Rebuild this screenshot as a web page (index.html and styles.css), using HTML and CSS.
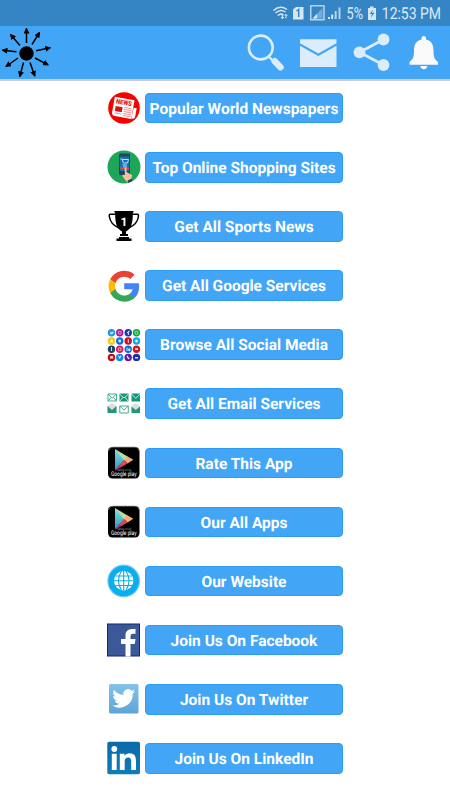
FILE: index.html
```html
<!DOCTYPE html>
<html lang="en">
<head>
<meta charset="utf-8">
<meta name="viewport" content="width=device-width, initial-scale=1">
<title>All in One</title>
<link rel="stylesheet" href="styles.css">
</head>
<body>
<svg class="defs" width="0" height="0" aria-hidden="true">
  <defs>
    <marker id="arrow" viewBox="0 0 6 6" refX="5" refY="3" markerWidth="6" markerHeight="6" markerUnits="userSpaceOnUse" orient="auto"><path d="M0 0L6 3L0 6z"/></marker>
    <linearGradient id="playBlue" x1="0" y1="0" x2="0" y2="1"><stop offset="0" stop-color="#8bdcdb"/><stop offset="1" stop-color="#249cc0"/></linearGradient>
    <linearGradient id="bird" x1="0" y1="0" x2="0" y2="1"><stop offset="0" stop-color="#82c3ea"/><stop offset="1" stop-color="#5ea4d6"/></linearGradient>
    <linearGradient id="link" x1="0" y1="0" x2="0" y2="1"><stop offset="0" stop-color="#0b6aa8"/><stop offset="1" stop-color="#0d7cbc"/></linearGradient>
    <symbol id="play" viewBox="0 0 34 34">
      <rect x="1" y="1" width="31.5" height="31.5" rx="4.5" fill="#000"/>
      <path d="M1.5 5Q2 1.2 6 1.2H28Q32 1.2 32.2 5" fill="none" stroke="#777" stroke-width=".8"/>
      <path d="M8 3V24L18.500 13z" fill="url(#playBlue)"/>
      <path d="M8 3L20.500 10.500L17.500 15z" fill="#b7dda9"/>
      <path d="M20.300 10.300L26.300 13.800L20.500 17.500L17 13.800z" fill="#f4b06c"/>
      <path d="M8 24.500L17 13.800L20.500 17.500z" fill="#d9485c"/>
      <path d="M8 24.500L12 19L14 21z" fill="#9a3a91"/>
      <text x="10" y="25.300" font-size="2.4" textLength="14" lengthAdjust="spacingAndGlyphs" fill="#bbb">ANDROID APP ON</text>
      <text x="4" y="30.300" font-size="6.300" textLength="25.500" lengthAdjust="spacingAndGlyphs" fill="#fff">Google play</text>
    </symbol>
  </defs>
</svg>

<div class="status">
  <svg width="178" height="26" viewBox="272 0 178 26">
    <g fill="none" stroke="#d6e7f4" stroke-width="1.5">
      <path d="M273.500 10.500Q280 4.500 287 9.500M275.500 13Q280.500 8.500 285.500 12M277.800 15.500Q280.800 13 283.500 15"/>
      <path d="M282.500 15v3.500M281 17l1.500 1.800 1.500-1.800M286 18.500V14.500M284.700 16l1.300-1.600 1.300 1.600" stroke-width="1"/>
      <rect x="310.800" y="5.800" width="13.200" height="14" stroke-width="1.200"/>
    </g>
    <path d="M293 9.500L296 7H303.500V19.500H293z" fill="#d6e7f4"/>
    <path d="M296.500 11L298.700 9.500V17" fill="none" stroke="#3585c5" stroke-width="1.500"/>
    <path d="M312.500 18.500L322.500 8V18.500z" fill="#73abd8"/>
    <path d="M312.500 18.500L317 14V18.500z" fill="#d6e7f4"/>
    <g fill="#d6e7f4"><path d="M328 17h2v2h-2z"/><path d="M331.200 14.500h2v4.500h-2z"/><path d="M334.700 11h2v8h-2z" opacity=".8"/><path d="M338.500 7.500h2V19h-2z" opacity=".8"/>
    <path d="M368 8h2V6.500h3.500V8h2.500V20h-8z"/></g>
    <path d="M373 9.500L369.700 14H372L370.800 18L374.500 12.700H372z" fill="#3585c5"/>
    <text x="346.500" y="19.300" textLength="16.500" lengthAdjust="spacingAndGlyphs">5%</text>
    <text x="381.800" y="19.300" textLength="59.200" lengthAdjust="spacingAndGlyphs">12:53 PM</text>
  </svg>
</div>

<header class="bar">
  <svg class="logo" width="54" height="53" viewBox="0 26 54 53">
    <circle cx="26.500" cy="53.500" r="7.200"/>
    <g stroke="#000" stroke-width="1.500">
      <path d="M26.500 43V28.500" marker-end="url(#arrow)"/><path d="M32 44.500L39.500 32.500" marker-end="url(#arrow)"/><path d="M36 50.800L50.300 47.800" marker-end="url(#arrow)"/><path d="M35 58L48 64.800" marker-end="url(#arrow)"/><path d="M30 62.500L34.800 76" marker-end="url(#arrow)"/><path d="M23.500 62.500L19.700 76.500" marker-end="url(#arrow)"/><path d="M18 58L6 66.500" marker-end="url(#arrow)"/><path d="M16.500 51.700L2.500 50.200" marker-end="url(#arrow)"/><path d="M20 45.500L10.500 34.500" marker-end="url(#arrow)"/>
    </g>
  </svg>
  <nav class="actions">
    <svg width="38" height="40" viewBox="247 32 38 40"><circle cx="260.800" cy="47.500" r="11.900" fill="none" stroke="#dbedfc" stroke-width="2.600"/><path d="M268.700 56.500L273 61" stroke="#dbedfc" stroke-width="2.200"/><path d="M274.700 61.300L280.500 67.200" stroke="#dbedfc" stroke-width="6.500" stroke-linecap="round"/></svg>
    <svg width="38" height="40" viewBox="299 32 38 40"><path d="M300 39.300H336.500V43.200L318.300 53.500L300 43.200zM300 45.800L318.300 56L336.500 45.800V67H300z" fill="#dbedfc"/></svg>
    <svg width="38" height="40" viewBox="353 32 38 40"><path d="M383.500 39.500L359.500 52.300L383.500 65" fill="none" stroke="#dbedfc" stroke-width="2.800"/><g fill="#dbedfc"><circle cx="383.500" cy="39.500" r="5.900"/><circle cx="359.500" cy="52.300" r="5.900"/><circle cx="383.500" cy="65" r="5.900"/></g></svg>
    <svg width="32" height="40" viewBox="408 32 32 40"><path d="M421.500 39.500V38Q421.500 36 423.700 36T426 38V39.500C432 41 433.500 45 433.500 51C433.500 58 435 59.500 438 62V64.800H409.500V62C412.500 59.500 414 58 414 51C414 45 415.500 41 421.500 39.500zM420.300 66H427.300Q426.500 69.200 423.800 69.200T420.300 66z" fill="#f9f9f9"/></svg>
  </nav>
</header>

<main class="list">
  <div class="row">
    <svg class="icon" viewBox="0 0 34 34"><circle cx="17" cy="17" r="15.800" fill="#f90000"/><g transform="rotate(10 17 17)"><path d="M6 7.500H26V26.500H9.500Q6 26.500 6 23.500z" fill="#fff"/><path d="M26.500 15H29.500V23.500Q29.500 26 27.500 26H26z" fill="#fff"/><text x="8" y="13.800" class="news" textLength="16" lengthAdjust="spacingAndGlyphs">NEWS</text><path d="M8.500 16.500h7v5h-7z" fill="#d61212"/><path d="M17 16.500h8M17 18.500h8M17 20.500h8M17 22.500h8M8.500 23.500h7M17 24.500h8" stroke="#ef8b8b" stroke-width=".9"/></g></svg>
    <a class="button" href="#">Popular World Newspapers</a>
  </div>
  <div class="row">
    <svg class="icon" viewBox="0 0 34 34"><circle cx="17" cy="17" r="16.500" fill="#1ba658"/><rect x="12" y="3.500" width="11" height="21.500" rx="1.500" fill="#28415d"/><path d="M13 6.500h9v14.500h-9z" fill="#156fb2"/><path d="M13.500 9h1.500l1.500 4h4l1-3.500h-6M15.500 15h4.500M16 17h4" fill="none" stroke="#b6e5ff" stroke-width="1"/><path d="M13 17.500h9v2h-9z" fill="#e44836"/><path d="M17.500 18Q18.500 16.500 19.500 18V22L25 25L24.500 30L20.500 32.500Q17 29 15.500 26Q15 24 18 25z" fill="#f4c39c"/><path d="M20.500 30.500L25 28.500V31L21 33z" fill="#344058"/></svg>
    <a class="button" href="#">Top Online Shopping Sites</a>
  </div>
  <div class="row">
    <svg class="icon" viewBox="0 0 34 34"><path d="M9 5.200H3.300Q2 5.200 2.300 7.500Q3.500 15.500 12 19M24.500 5.200H30.500Q31.700 5.200 31.400 7.500Q30.500 15.500 21.500 19" fill="none" stroke="#000" stroke-width="1.500"/><path d="M7.500 2H26.500V3.500H25.800C26 13 24.500 20 19 22.500V25H21V27H13V25H15V22.500C9.500 20 8 13 8.200 3.500H7.500zM12 28H22V29.500H24.500V32H9.500V29.500H12z"/><text class="one" x="13.500" y="16.500">1</text></svg>
    <a class="button" href="#">Get All Sports News</a>
  </div>
  <div class="row">
    <svg class="icon" viewBox="0 0 34 34"><g transform="translate(1.600 1.500) scale(1.300)"><path fill="#4285f4" d="M23.500 12.300c0-.8-.1-1.600-.2-2.400H12v4.600h6.500a5.600 5.600 0 0 1-2.400 3.600v3h3.900c2.300-2.100 3.500-5.200 3.500-8.800z"/><path fill="#34a853" d="M12 24c3.200 0 5.900-1.100 8-2.900l-3.900-3a7.200 7.200 0 0 1-10.800-3.800h-4v3.100A12 12 0 0 0 12 24z"/><path fill="#fbbc05" d="M5.300 14.300a7.200 7.200 0 0 1 0-4.600V6.600h-4a12 12 0 0 0 0 10.800z"/><path fill="#ea4335" d="M12 4.800c1.800 0 3.400.6 4.600 1.800L20 3.200A12 12 0 0 0 1.300 6.600l4 3.100A7.200 7.200 0 0 1 12 4.800z"/></g></svg>
    <a class="button" href="#">Get All Google Services</a>
  </div>
  <div class="row">
    <svg class="icon" viewBox="0 0 34 34">
      <circle cx="4.500" cy="4.700" r="3.700" fill="#149af0"/><circle cx="12.700" cy="4.700" r="3.700" fill="#a31993"/><circle cx="21.200" cy="4.700" r="3.700" fill="#173ba8"/><circle cx="29.500" cy="4.700" r="3.700" fill="#12ad3d"/>
      <circle cx="4.500" cy="13" r="3.700" fill="#ffc400"/><circle cx="12.700" cy="13" r="3.700" fill="#0670ef"/><circle cx="21.200" cy="13" r="3.700" fill="#c70e28"/><circle cx="29.500" cy="13" r="3.700" fill="#0ba7ef"/>
      <circle cx="4.500" cy="21.200" r="3.700" fill="#184867"/><circle cx="12.700" cy="21.200" r="3.700" fill="#e71660"/><circle cx="21.200" cy="21.200" r="3.700" fill="#086fd7"/><circle cx="29.500" cy="21.200" r="3.700" fill="#cc1924"/>
      <circle cx="4.500" cy="29.400" r="3.700" fill="#c9090d"/><circle cx="12.700" cy="29.400" r="3.700" fill="#108de7"/><circle cx="21.200" cy="29.400" r="3.700" fill="#6a159f"/><circle cx="29.500" cy="29.400" r="3.700" fill="#1731a8"/>
      <g fill="#fff" opacity=".85"><path d="M2.700 3.500l2 1 1.700-1.300Q6.800 7 2.700 6.200l1-.7zM2.800 14.500Q3.700 13.500 3.500 12q1-1.500 2 0 0 1.500 1 2.500zM3 28.300h3.200v2.300H3zM11 27.800h1l.5 1.300 1-1.500 1 .5-2 3zM19.500 28l1.300-.5.5 1.500 1.500 1.500-1 1q-2-1-2.300-3.500zM28 29h3v1.500h-3z"/><path d="M20.800 7V5h-.8V4h.8Q20.700 2.500 22.700 2.700v1h-.8V7zM4 19h1v4H4zM19.500 19.500h1V23h-1zM21.300 20.500h2V23h-2zM28 20.300h3v1.800h-3zM20.800 11h1v4h-1z"/><circle cx="12.700" cy="13" r="1.400"/><circle cx="29.500" cy="13" r="1.400"/></g>
      <g fill="none" stroke="#fff" stroke-width=".7" opacity=".85"><rect x="11.300" y="3.300" width="2.800" height="2.800" rx=".7"/><circle cx="29.500" cy="4.700" r="1.500"/><circle cx="12.700" cy="21.200" r="1.500"/></g>
    </svg>
    <a class="button" href="#">Browse All Social Media</a>
  </div>
  <div class="row">
    <svg class="icon" viewBox="0 0 34 34"><g fill="none" stroke="#46ad91" stroke-width="1"><path d="M1 7h8.500v7H1zM1 7l4.200 4L9.500 7M1 14l3-3.500M9.500 14l-3-3.500"/><path d="M12.800 19h8.500v7h-8.500zM12.800 19l4.200 4 4.300-4"/></g><path d="M12.500 6.500H21.500V14.500H12.500zM24.500 6.500H33V14.500H24.500z" fill="#189477"/><path d="M12.500 7L17 11L21.500 7M12.500 14.500L16 10.300M21.500 14.500L18 10.300M24.500 7L28.800 11.500L33 7" fill="none" stroke="#e9fff9" stroke-width=".8"/><path d="M.5 19L5 16L9.500 19V23H.5zM24.500 19L28.800 16L33 19V23H24.500z" fill="#ddd"/><path d="M.5 19L5 23L9.500 19V26H.5zM24.500 19.500L28.800 23L33 19.500V26H24.500z" fill="#20987b"/></svg>
    <a class="button" href="#">Get All Email Services</a>
  </div>
  <div class="row">
    <svg class="icon"><use href="#play"/></svg>
    <a class="button" href="#">Rate This App</a>
  </div>
  <div class="row">
    <svg class="icon"><use href="#play"/></svg>
    <a class="button" href="#">Our All Apps</a>
  </div>
  <div class="row">
    <svg class="icon" viewBox="0 0 34 34"><circle cx="16.700" cy="17" r="15.800" fill="#08aeef" stroke="#74c9ef" stroke-width="1.200"/><circle cx="16.700" cy="16.700" r="9.700" fill="#fff"/><path d="M16.700 7v19.500M7 16.700h19.500M8.500 12h16.500M8.500 21.500h16.500M14.500 7Q8.500 16.500 14.500 26.500M19 7Q25 16.500 19 26.500" fill="none" stroke="#08aeef" stroke-width="1.100"/></svg>
    <a class="button" href="#">Our Website</a>
  </div>
  <div class="row">
    <svg class="icon" viewBox="0 0 34 34"><rect x=".5" y="1" width="32" height="32" fill="#3b5998" stroke="#142478" stroke-width="1"/><path d="M18.500 33.500V21H14V16H18.500V12.500Q18.500 6 25 6H28.500V10.800H26Q23.500 10.800 23.500 13.200V16H28.500L27.800 21H23.500V33.500z" fill="#fff"/></svg>
    <a class="button" href="#">Join Us On Facebook</a>
  </div>
  <div class="row">
    <svg class="icon" viewBox="0 0 34 34"><rect x="2" y="2" width="29.500" height="29.500" rx="1.500" fill="url(#bird)"/><path transform="translate(5.300 5) scale(.95)" d="M24 4.600a10 10 0 0 1-2.800.8 5 5 0 0 0 2.100-2.700 10 10 0 0 1-3.100 1.200 4.900 4.900 0 0 0-8.400 4.500A14 14 0 0 1 1.700 3.200a4.900 4.900 0 0 0 1.500 6.500 5 5 0 0 1-2.200-.6 4.900 4.900 0 0 0 4 4.900 5 5 0 0 1-2.300.1 4.900 4.900 0 0 0 4.600 3.400A9.900 9.900 0 0 1 0 19.500a14 14 0 0 0 21.500-12.400A10 10 0 0 0 24 4.600z" fill="#fff"/></svg>
    <a class="button" href="#">Join Us On Twitter</a>
  </div>
  <div class="row">
    <svg class="icon" viewBox="0 0 34 34"><rect x=".3" y=".8" width="32.700" height="32.500" rx="1.800" fill="url(#link)"/><circle cx="7.300" cy="8" r="2.900" fill="#fff"/><path d="M4.800 12.800H9.700V29H4.800zM12.800 12.800H17.500V15Q19 12.300 22.700 12.300Q29 12.300 29 19.500V29H24.200V20.500Q24.200 16.600 21.200 16.600Q17.700 16.600 17.700 20.500V29H12.800z" fill="#fff"/></svg>
    <a class="button" href="#">Join Us On LinkedIn</a>
  </div>
</main>
</body>
</html>
```
FILE: styles.css
```css
* { box-sizing: border-box; }

body {
  margin: 0;
  height: 800px;
  overflow: hidden;
  background: #fff;
  font-family: Roboto, sans-serif;
  text-rendering: geometricPrecision;
}

svg { display: block; flex: none; }

.defs { position: absolute; }

.status {
  display: flex;
  justify-content: flex-end;
  height: 26px;
  background: #3585c5;
}

.status text {
  font-size: 16.5px;
  fill: #dceaf6;
}

.bar {
  display: flex;
  justify-content: space-between;
  height: 55px;
  background: #42a5f5;
  border-bottom: 2px solid #ccc;
}

.actions {
  display: flex;
  gap: 16px;
  padding: 6px 10px 0 0;
}

.actions svg:first-child { margin-right: -2px; }
.actions svg:last-child { margin-left: 1px; }

.list {
  display: flex;
  flex-direction: column;
  gap: 25.12px;
  padding: 10.2px 0 0 107px;
}

.row {
  display: flex;
  align-items: center;
  gap: 4px;
  height: 34px;
}

.icon { width: 34px; height: 34px; }

.icon text { font-family: Roboto, sans-serif; }

.icon .news {
  font-size: 6.5px;
  font-weight: 900;
  fill: #e11;
}

.icon .one {
  font-size: 12px;
  font-weight: 700;
  fill: #fff;
}

.button {
  width: 198px;
  height: 30.5px;
  border: 1px solid #2d9df4;
  border-radius: 4px;
  background: #42a5f5;
  color: #fff;
  font-size: 15.5px;
  font-weight: 700;
  line-height: 30.5px;
  text-align: center;
  text-decoration: none;
  white-space: nowrap;
}
```
